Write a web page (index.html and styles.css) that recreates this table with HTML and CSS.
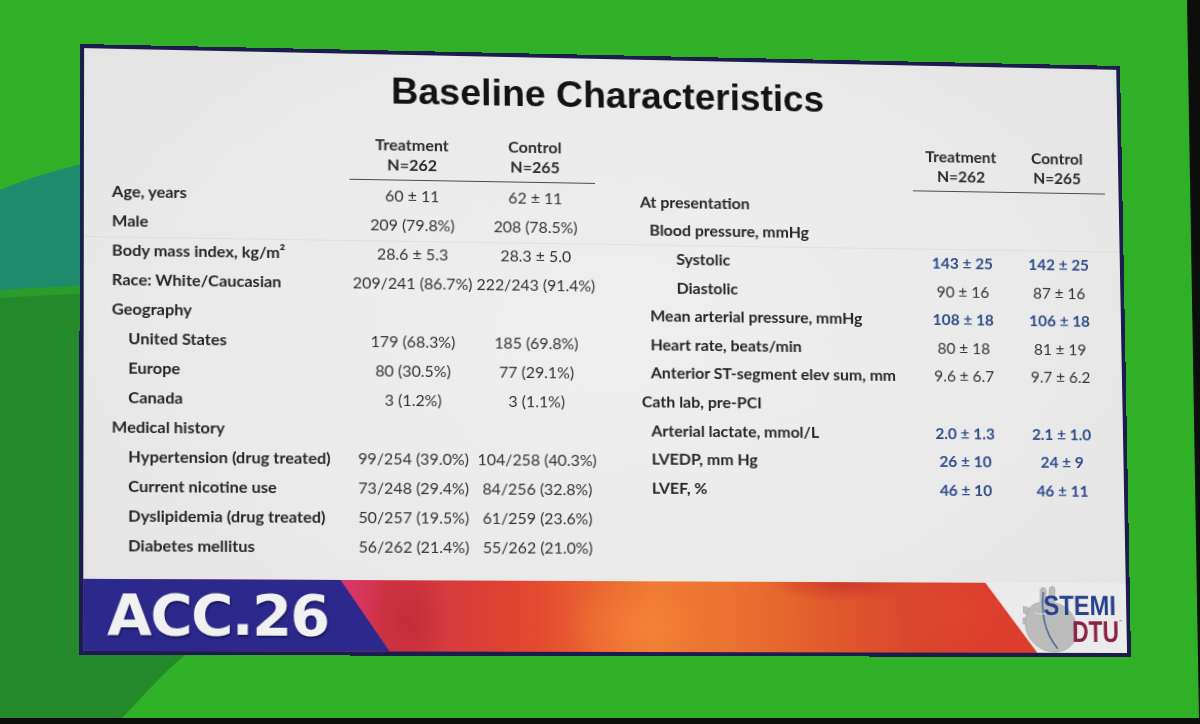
FILE: index.html
```html
<!DOCTYPE html>
<html lang="en">
<head>
<meta charset="utf-8">
<title>Baseline Characteristics</title>
<link rel="stylesheet" href="styles.css">
</head>
<body>
<div class="screen">
  <svg class="backdrop" viewBox="0 0 1200 718" width="1200" height="718" aria-hidden="true">
    <rect x="0" y="0" width="1200" height="718" fill="#2fb026"/>
    <path d="M0,190 C30,178 60,168 110,158 L320,138 L320,330 L0,330 Z" fill="#1f8b6d"/>
    <path d="M0,290 C60,286 150,282 320,279 L320,300 L0,300 Z" fill="#2a9c2b"/>
    <path d="M0,298 C60,294 150,290 320,288 L320,600 C250,622 205,640 184,656 C166,670 145,694 122,718 L0,718 Z" fill="#24892a"/>
    <polygon points="1187,0 1200,0 1200,718 1199,718" fill="#0b0e0b"/>
  </svg>
  <div class="stage">
    <div class="slide">
      <h1 class="title">Baseline Characteristics</h1>
      <div class="tables">
        <div class="tbl tbl-left">
          <div class="thead">
            <span></span>
            <span class="col">Treatment<br>N=262</span>
            <span class="col">Control<br>N=265</span>
          </div>
          <div class="row"><span class="lab">Age, years</span><span class="val">60 ± 11</span><span class="val">62 ± 11</span></div>
          <div class="row"><span class="lab">Male</span><span class="val">209 (79.8%)</span><span class="val">208 (78.5%)</span></div>
          <div class="row"><span class="lab">Body mass index, kg/m²</span><span class="val">28.6 ± 5.3</span><span class="val">28.3 ± 5.0</span></div>
          <div class="row"><span class="lab">Race: White/Caucasian</span><span class="val">209/241 (86.7%)</span><span class="val">222/243 (91.4%)</span></div>
          <div class="row"><span class="lab">Geography</span><span class="val"></span><span class="val"></span></div>
          <div class="row"><span class="lab i1">United States</span><span class="val">179 (68.3%)</span><span class="val">185 (69.8%)</span></div>
          <div class="row"><span class="lab i1">Europe</span><span class="val">80 (30.5%)</span><span class="val">77 (29.1%)</span></div>
          <div class="row"><span class="lab i1">Canada</span><span class="val">3 (1.2%)</span><span class="val">3 (1.1%)</span></div>
          <div class="row"><span class="lab">Medical history</span><span class="val"></span><span class="val"></span></div>
          <div class="row"><span class="lab i1">Hypertension (drug treated)</span><span class="val">99/254 (39.0%)</span><span class="val">104/258 (40.3%)</span></div>
          <div class="row"><span class="lab i1">Current nicotine use</span><span class="val">73/248 (29.4%)</span><span class="val">84/256 (32.8%)</span></div>
          <div class="row"><span class="lab i1">Dyslipidemia (drug treated)</span><span class="val">50/257 (19.5%)</span><span class="val">61/259 (23.6%)</span></div>
          <div class="row"><span class="lab i1">Diabetes mellitus</span><span class="val">56/262 (21.4%)</span><span class="val">55/262 (21.0%)</span></div>
        </div>
        <div class="tbl tbl-right">
          <div class="thead">
            <span></span>
            <span class="col">Treatment<br>N=262</span>
            <span class="col">Control<br>N=265</span>
          </div>
          <div class="row"><span class="lab">At presentation</span><span class="val"></span><span class="val"></span></div>
          <div class="row"><span class="lab i1">Blood pressure, mmHg</span><span class="val"></span><span class="val"></span></div>
          <div class="row"><span class="lab i2">Systolic</span><span class="val hl">143 ± 25</span><span class="val hl">142 ± 25</span></div>
          <div class="row"><span class="lab i2">Diastolic</span><span class="val">90 ± 16</span><span class="val">87 ± 16</span></div>
          <div class="row"><span class="lab i1">Mean arterial pressure, mmHg</span><span class="val hl">108 ± 18</span><span class="val hl">106 ± 18</span></div>
          <div class="row"><span class="lab i1">Heart rate, beats/min</span><span class="val">80 ± 18</span><span class="val">81 ± 19</span></div>
          <div class="row"><span class="lab i1">Anterior ST-segment elev sum, mm</span><span class="val">9.6 ± 6.7</span><span class="val">9.7 ± 6.2</span></div>
          <div class="row"><span class="lab">Cath lab, pre-PCI</span><span class="val"></span><span class="val"></span></div>
          <div class="row"><span class="lab i1">Arterial lactate, mmol/L</span><span class="val hl">2.0 ± 1.3</span><span class="val hl">2.1 ± 1.0</span></div>
          <div class="row"><span class="lab i1">LVEDP, mm Hg</span><span class="val hl">26 ± 10</span><span class="val hl">24 ± 9</span></div>
          <div class="row"><span class="lab i1">LVEF, %</span><span class="val hl">46 ± 10</span><span class="val hl">46 ± 11</span></div>
        </div>
      </div>
      <div class="band">
        <div class="colors"></div>
        <div class="acc">ACC.26</div>
        <div class="logo">
          <svg class="logo-svg" viewBox="0 0 144 70" width="144" height="70">
            <g fill="#bcbcbc" stroke="#a9a9a9" stroke-width="0.8">
              <path d="M56,24 L56,8 C56,3.5 62,3.5 62,8 L62,24 Z"/>
              <path d="M64,24 L65.5,6 C65.5,2.5 71,2.5 71,6 L70,24 Z"/>
              <path d="M47,26 L38.5,23.5 L38.5,30 L45,32 Z"/>
              <path d="M44,35 L38,35 L38,41 L43,41 Z"/>
              <path d="M47,23 C40,29 38,43 43,53 C49,64 61,70 72,69 C84,68 92,60 93,49 C94,38 88,28 79,23 C70,18 55,17 47,23 Z"/>
            </g>
            <path d="M59,9 C57,28 58,48 73,66" fill="none" stroke="#47648f" stroke-width="1.5"/>
            <path d="M50,30 C56,32 64,31 70,28" fill="none" stroke="#d8d8d8" stroke-width="1.2"/>
            <text class="logo-stemi" transform="translate(59 32) scale(0.87 1)">STEMI</text>
            <text class="logo-dtu" transform="translate(88 59) scale(0.78 1)">DTU</text>
            <text class="logo-tm" x="136" y="40">™</text>
          </svg>
        </div>
      </div>
    </div>
  </div>
</div>
</body>
</html>
```

FILE: styles.css
```css
html, body {
  margin: 0;
  padding: 0;
  background: #0a0d0a;
}

body {
  width: 1200px;
  height: 724px;
  overflow: hidden;
  font-family: "Lato", "Open Sans", "DejaVu Sans", sans-serif;
}

.screen {
  display: grid;
  width: 1200px;
  height: 718px;
}

.backdrop,
.stage {
  grid-area: 1 / 1;
}

.backdrop {
  display: block;
}

.stage {
  width: 1200px;
  height: 718px;
}

/* the projected slide: a homography maps the flat 1047x600 slide to the photographed quad */
.slide {
  width: 1047px;
  height: 600px;
  box-sizing: border-box;
  border: 4px solid #1c1c4e;
  background:
    linear-gradient(to bottom, transparent 186px, rgba(0, 0, 0, 0.05) 186px, rgba(0, 0, 0, 0.05) 187.5px, transparent 187.5px),
    radial-gradient(ellipse at 50% 45%, #efefef 0%, #eaeaea 55%, #e2e2e2 100%);
  display: flex;
  flex-direction: column;
  transform-origin: 0 0;
  transform: matrix3d(1.029558, 0.023148, 0, 0.00003236,
                      -0.0032152, 1.005494, 0, -0.0000196,
                      0, 0, 1, 0,
                      80, 44, 0, 1);
}

.title {
  margin: 0;
  padding-top: 17.3px;
  font-family: "Liberation Sans", Arial, sans-serif;
  font-weight: 700;
  font-size: 37.5px;
  line-height: 38px;
  text-align: center;
  color: #131313;
}

.tables {
  display: flex;
  align-items: flex-start;
  gap: 44.4px;
  padding-left: 27.3px;
  margin-top: 24.7px;
}

.tbl {
  display: flex;
  flex-direction: column;
  font-size: 16px;
  color: #2e2e2e;
}

.tbl-left {
  --cols: 233px 124px 121px;
  --rowh: 29px;
  --padb: 5.5px;
}

.tbl-right {
  --cols: 277px 100px 98px;
  --rowh: 28.6px;
  --padb: 5px;
  margin-top: 2px;
}

.thead,
.row {
  display: grid;
  grid-template-columns: var(--cols);
}

.thead {
  line-height: 20px;
  font-weight: 700;
  color: #2a2a2a;
  text-align: center;
}

.thead .col {
  padding-bottom: var(--padb);
  border-bottom: 1.5px solid #4b4b4b;
}

.row {
  height: var(--rowh);
  align-items: center;
}

.lab {
  font-weight: 700;
  color: #262626;
  white-space: nowrap;
}

.val {
  text-align: center;
  font-size: 15.8px;
  color: #333333;
  white-space: nowrap;
}

.val.hl {
  color: #2f4c8c;
  font-weight: 700;
}

.tbl-left .i1 {
  padding-left: 16px;
}

.tbl-right .i1 {
  padding-left: 9.3px;
}

.tbl-right .i2 {
  padding-left: 36px;
}

/* bottom conference band */
.band {
  margin-top: auto;
  height: 70px;
  display: grid;
  grid-template-columns: 298px 1fr 144px;
}

.band > * {
  grid-row: 1;
}

.colors {
  grid-column: 1 / -1;
  background:
    radial-gradient(ellipse 75px 20px at 750px 0px, rgba(200, 52, 42, 0.85), rgba(200, 52, 42, 0)),
    radial-gradient(ellipse 40px 70px at 318px 40px, rgba(190, 40, 50, 0.7), rgba(190, 40, 50, 0)),
    radial-gradient(ellipse 70px 50px at 540px 45px, rgba(247, 140, 60, 0.5), rgba(247, 140, 60, 0)),
    radial-gradient(ellipse 60px 40px at 860px 30px, rgba(225, 70, 50, 0.6), rgba(225, 70, 50, 0)),
    linear-gradient(90deg, #d8376a 255px, #d13448 290px, #d43a42 340px, #dc3f36 390px, #e3492f 440px,
      #ea6330 500px, #ef7a33 560px, #ec7331 630px, #e6652d 690px, #df542c 760px, #d9452d 830px, #dc3d2c 900px);
}

.acc {
  grid-column: 1;
  background: #2d298c;
  clip-path: polygon(0 0, 250px 0, 100% 100%, 0 100%);
  padding: 7px 0 0 23px;
  font-family: "DejaVu Sans", sans-serif;
  font-weight: 700;
  font-size: 56px;
  line-height: 56px;
  letter-spacing: -1.6px;
  color: #f1f1f1;
  text-shadow: 1px 2px 2px rgba(10, 8, 50, 0.55);
}

.logo {
  grid-column: 3;
  background: #ebebeb;
  clip-path: polygon(0 0, 100% 0, 100% 100%, 52px 100%);
}

.logo-svg {
  display: block;
}

.logo-stemi {
  font-family: "Liberation Sans", Arial, sans-serif;
  font-weight: 700;
  font-size: 28px;
  fill: #27428d;
}

.logo-dtu {
  font-family: "Liberation Sans", Arial, sans-serif;
  font-weight: 700;
  font-size: 30px;
  fill: #8a2247;
}

.logo-tm {
  font-family: "DejaVu Sans", sans-serif;
  font-size: 4px;
  fill: #8a2247;
}
```
